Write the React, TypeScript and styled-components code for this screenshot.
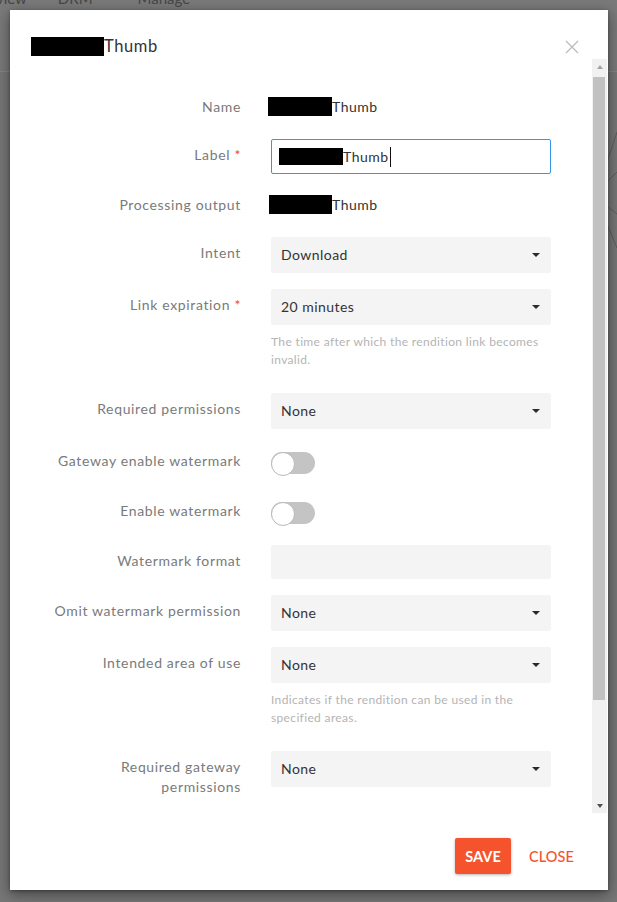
import React from "react";
import styled, { createGlobalStyle } from "styled-components";

const GlobalStyle = createGlobalStyle`
  html, body { margin: 0; padding: 0; }
  body {
    font-family: "Lato", "Liberation Sans", sans-serif;
    background: #777777;
    overflow: hidden;
  }
  * { box-sizing: border-box; }
`;

const Backdrop = styled.div`
  position: relative;
  width: 617px;
  height: 902px;
  overflow: hidden;
  background: #777777;
`;

const TopBar = styled.div`
  height: 72px;
  border-bottom: 1px solid #868686;
  background: #7a7a7a;
  display: flex;
  align-items: flex-start;
`;

const NavItem = styled.span<{ $ml: number }>`
  margin-left: ${(p) => p.$ml}px;
  margin-top: -12px;
  font-size: 15px;
  line-height: 20px;
  color: #474747;
  white-space: nowrap;
`;

const GraphLines = styled.svg`
  position: absolute;
  right: 0;
  top: 120px;
`;

const Dialog = styled.div`
  position: absolute;
  left: 10px;
  top: 10px;
  width: 598px;
  height: 880px;
  background: #ffffff;
  box-shadow: 0 4px 14px rgba(0, 0, 0, 0.45), 0 1px 3px rgba(0, 0, 0, 0.3);
  display: flex;
  flex-direction: column;
`;

const Header = styled.div`
  height: 49px;
  padding: 26px 29px 3px 21px;
  display: flex;
  justify-content: space-between;
  align-items: flex-start;
  flex: none;
`;

const Title = styled.div`
  font-size: 16.5px;
  line-height: 20px;
  letter-spacing: 0.6px;
  color: #333333;
  white-space: nowrap;
`;

const CloseIcon = styled.button`
  margin-top: 4px;
  width: 14px;
  height: 14px;
  padding: 0;
  border: 0;
  background: transparent;
  display: flex;
`;

const ScrollRow = styled.div`
  flex: 1;
  min-height: 0;
  display: flex;
`;

const ScrollContent = styled.div`
  flex: 1;
  min-width: 0;
  overflow: hidden;
  padding: 32px 0 0 41px;
`;

const ScrollBar = styled.div`
  flex: none;
  width: 15px;
  margin-right: 1px;
  background: #f1f1f1;
  display: flex;
  flex-direction: column;
`;

const ScrollButton = styled.div<{ $down?: boolean }>`
  flex: none;
  height: 15px;
  display: flex;
  align-items: center;
  justify-content: center;
  &::before {
    content: "";
    width: 0;
    height: 0;
    border-left: 3.5px solid transparent;
    border-right: 3.5px solid transparent;
    ${(p) =>
      p.$down
        ? "border-top: 4px solid #505050;"
        : "border-bottom: 4px solid #a3a3a3;"}
  }
`;

const ScrollTrack = styled.div`
  flex: 1;
  padding: 3px 2px 0 1px;
`;

const ScrollThumb = styled.div`
  height: 623px;
  background: #c1c1c1;
`;

const Field = styled.div<{ $gap?: number }>`
  display: grid;
  grid-template-columns: 190px 280px;
  column-gap: 30px;
  margin-bottom: ${(p) => p.$gap ?? 16}px;
`;

const Label = styled.div`
  text-align: right;
  font-size: 14px;
  line-height: 20px;
  letter-spacing: 0.65px;
  padding-top: 5.5px;
  color: #7a7a7a;
`;

const Req = styled.span`
  color: #f0443a;
`;

const Control = styled.div`
  display: flex;
  flex-direction: column;
`;

const StaticValue = styled.div`
  height: 32px;
  padding-top: 5.5px;
  font-size: 14px;
  line-height: 20px;
  letter-spacing: 0.5px;
  color: #333333;
  white-space: nowrap;
`;

const Redacted = styled.span<{ $w: number; $h: number; $ml?: number }>`
  display: inline-block;
  width: ${(p) => p.$w}px;
  height: ${(p) => p.$h}px;
  margin-left: ${(p) => p.$ml ?? 0}px;
  background: #000000;
  vertical-align: -4px;
`;

const TextInput = styled.div`
  height: 35px;
  border: 1px solid #3597ec;
  border-radius: 2px;
  padding: 0 7px;
  display: flex;
  align-items: center;
  font-size: 14px;
  letter-spacing: 0.5px;
  color: #333333;
  white-space: nowrap;
`;

const Caret = styled.span`
  display: inline-block;
  width: 1px;
  height: 20px;
  background: #111;
  margin-left: 1px;
`;

const EmptyInput = styled.div`
  height: 34px;
  background: #f4f4f4;
  border-radius: 2px;
`;

const Select = styled.div`
  height: 36px;
  background: #f4f4f4;
  border-radius: 2px;
  padding: 0 11px 2px 10px;
  display: flex;
  align-items: center;
  justify-content: space-between;
  font-size: 14px;
  letter-spacing: 0.45px;
  color: #333333;
`;

const Arrow = styled.span`
  width: 0;
  height: 0;
  margin-top: 2px;
  border-left: 4px solid transparent;
  border-right: 4px solid transparent;
  border-top: 4px solid #2a2a2a;
`;

const Help = styled.div`
  margin-top: 8px;
  padding-bottom: 8px;
  font-size: 12px;
  line-height: 18px;
  letter-spacing: 0.35px;
  color: #b4b4b4;
`;

const SwitchWrap = styled.div`
  height: 34px;
  padding-top: 7px;
`;

const Switch = styled.span`
  position: relative;
  display: block;
  width: 44px;
  height: 22px;
  border-radius: 11px;
  background: #c4c4c4;
  &::after {
    content: "";
    position: absolute;
    left: 0;
    top: 0;
    width: 22px;
    height: 22px;
    border-radius: 50%;
    background: #ffffff;
    border: 1px solid #b8b8b8;
  }
`;

const Footer = styled.div`
  flex: none;
  display: flex;
  justify-content: flex-end;
  gap: 8px;
  padding: 25px 24px 16px;
`;

const Button = styled.button<{ $primary?: boolean }>`
  height: 36px;
  padding: 0 10px;
  border: 0;
  border-radius: 2px;
  font-family: "Lato", "Liberation Sans", sans-serif;
  font-size: 14.5px;
  font-weight: ${(p) => (p.$primary ? 700 : 500)};
  letter-spacing: 0.1px;
  background: ${(p) => (p.$primary ? "#f4532d" : "transparent")};
  color: ${(p) => (p.$primary ? "#ffffff" : "#f4532d")};
  box-shadow: ${(p) => (p.$primary ? "0 1px 3px rgba(0,0,0,0.3)" : "none")};
`;

type SelectRowProps = { label: React.ReactNode; value: string; help?: string };

const SelectRow = ({ label, value, help }: SelectRowProps) => (
  <Field>
    <Label>{label}</Label>
    <Control>
      <Select>
        <span>{value}</span>
        <Arrow />
      </Select>
      {help && <Help>{help}</Help>}
    </Control>
  </Field>
);

const SwitchRow = ({ label }: { label: string }) => (
  <Field>
    <Label>{label}</Label>
    <SwitchWrap>
      <Switch />
    </SwitchWrap>
  </Field>
);

export default function App() {
  return (
    <>
      <GlobalStyle />
      <Backdrop>
        <TopBar>
          <NavItem $ml={-37}>Overview</NavItem>
          <NavItem $ml={31}>DRM</NavItem>
          <NavItem $ml={45}>Manage</NavItem>
        </TopBar>
        <GraphLines width="10" height="140" viewBox="0 0 10 140">
          <g stroke="#5e5e5e" strokeWidth="1" fill="none">
            <line x1="10" y1="12" x2="0" y2="42" />
            <line x1="10" y1="52" x2="0" y2="62" />
            <line x1="0" y1="86" x2="10" y2="94" />
            <line x1="0" y1="104" x2="10" y2="128" />
          </g>
        </GraphLines>
        <Dialog>
          <Header>
            <Title>
              <Redacted $w={73} $h={19} />
              Thumb
            </Title>
            <CloseIcon aria-label="Close">
              <svg width="14" height="14" viewBox="0 0 14 14">
                <path d="M1 1L13 13M13 1L1 13" stroke="#bdbdbd" strokeWidth="1.4" fill="none" />
              </svg>
            </CloseIcon>
          </Header>
          <ScrollRow>
            <ScrollContent>
              <Field>
                <Label>Name</Label>
                <StaticValue>
                  <Redacted $w={64} $h={19} $ml={-3} />
                  Thumb
                </StaticValue>
              </Field>
              <Field $gap={15}>
                <Label>
                  Label <Req>*</Req>
                </Label>
                <TextInput>
                  <Redacted $w={64} $h={17} />
                  Thumb
                  <Caret />
                </TextInput>
              </Field>
              <Field>
                <Label>Processing output</Label>
                <StaticValue>
                  <Redacted $w={63} $h={19} $ml={-2} />
                  Thumb
                </StaticValue>
              </Field>
              <SelectRow label="Intent" value="Download" />
              <SelectRow
                label={
                  <>
                    Link expiration <Req>*</Req>
                  </>
                }
                value="20 minutes"
                help="The time after which the rendition link becomes invalid."
              />
              <SelectRow label="Required permissions" value="None" />
              <SwitchRow label="Gateway enable watermark" />
              <SwitchRow label="Enable watermark" />
              <Field>
                <Label>Watermark format</Label>
                <EmptyInput />
              </Field>
              <SelectRow label="Omit watermark permission" value="None" />
              <SelectRow
                label="Intended area of use"
                value="None"
                help="Indicates if the rendition can be used in the specified areas."
              />
              <SelectRow label="Required gateway permissions" value="None" />
            </ScrollContent>
            <ScrollBar>
              <ScrollButton />
              <ScrollTrack>
                <ScrollThumb />
              </ScrollTrack>
              <ScrollButton $down />
            </ScrollBar>
          </ScrollRow>
          <Footer>
            <Button $primary>SAVE</Button>
            <Button>CLOSE</Button>
          </Footer>
        </Dialog>
      </Backdrop>
    </>
  );
}
